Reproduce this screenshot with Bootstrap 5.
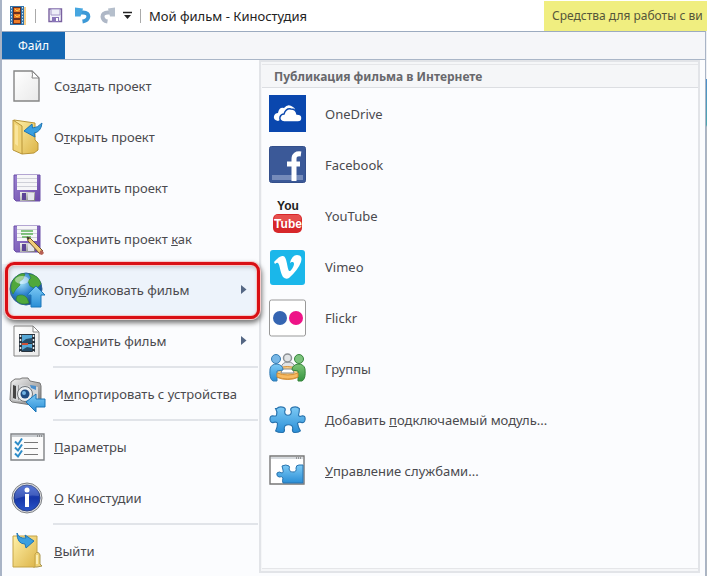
<!DOCTYPE html>
<html lang="ru">
<head>
<meta charset="utf-8">
<meta name="viewport" content="width=device-width, initial-scale=1">
<title>Мой фильм - Киностудия</title>
<link href="https://cdn.jsdelivr.net/npm/bootstrap@5.3.0/dist/css/bootstrap.min.css" rel="stylesheet">
<style>
body { font-family: "Noto Sans", "Open Sans", sans-serif; font-size: 13px; line-height: 18px; color: #4a4a4e; background: #fff; }
button { font: inherit; color: inherit; }
svg { display: block; flex: none; overflow: visible; }
.app-window { border-left: 2px solid #a9b4c6; }
.title-bar { height: 31px; padding-left: 6px; }
.quick-btn { border: 0; background: none; padding: 0; }
.v-line { width: 1px; height: 14px; background: #aaa; }
.app-title { font-size: 13px; color: #222; }
.context-tab { width: 163px; height: 30px; padding-left: 8px; background: #f0ee80; color: #55553a; font-size: 12px; white-space: nowrap; }
.frame-edge { padding-right: 1px; background: linear-gradient(#eef0f4 48px, #4c8fcb 48px, #4fa7b0 94px, #aeb6c0 96px); }
.file-frame { border-top: 1px solid #9cabc0; border-right: 1px solid #a9b4c6; background: #f5f6f9; }
.tab-strip { height: 28px; border-bottom: 1px solid #aab6c8; }
.file-tab { width: 63px; height: 27px; border: 0; background: #1467b3; color: #fff; font-size: 12px; }
.menu-body { background: #fbfcfe; min-height: calc(100vh - 60px); }
.menu-left { width: 256px; }
.menu-item { height: 51px; padding: 0 11px 0 6px; border: 0; background: none; text-align: left; gap: 8px; }
.menu-ico { width: 38px; display: flex; justify-content: center; }
.menu-sep { height: 2px; margin-left: 51px; background: #e1e4e9; }
.menu-item.chosen { position: relative; background: #edf3fb; }
.menu-item.chosen::after { content: ""; position: absolute; z-index: 2; inset: -2px -2px -4px 3px; border: 3px solid #d90f14; border-radius: 9px; box-shadow: 0 0 0 1px #f6c9c9, 1px 3px 5px 1px #777, inset 0 0 0 1px #f6c9c9, inset 1px 2px 4px #8888; }
.menu-right { border: 2px solid #e2e4e8; margin: 0 5px 3px 1px; padding: 2px 0 2px 1px; background: #f5f6f8; }
.pane { background: #fbfcfe; border: 1px solid #e5e6e9; border-width: 1px 0; }
.pane-title { font-size: 12px; line-height: 20px; font-weight: 700; color: #68686c; background: #f5f6f8; border-bottom: 1px solid #dcdee2; padding: 2px 0 0 12px; margin: 0; }
.service { height: 51px; padding: 0 7px; border: 0; background: none; text-align: left; gap: 18px; }
.svc-ico { width: 38px; }
.tube-text { font-family: "Liberation Sans Narrow", "Liberation Sans", sans-serif; font-weight: 700; font-size: 12px; }
</style>
<script src="https://cdn.jsdelivr.net/npm/bootstrap@5.3.0/dist/js/bootstrap.bundle.min.js"></script>
</head>
<body>
<svg width="0" height="0" class="position-absolute" aria-hidden="true">
  <defs>
    <linearGradient id="gold" x1="0" y1="0" x2="1" y2="1"><stop offset="0" stop-color="#fff0a8"/><stop offset="1" stop-color="#dcb448"/></linearGradient>
    <linearGradient id="paper" x1="0" y1="0" x2="1" y2="1"><stop offset="0" stop-color="#fff"/><stop offset="1" stop-color="#e9e9e9"/></linearGradient>
    <linearGradient id="sky" x1="0" y1="0" x2="0" y2="1"><stop offset="0" stop-color="#7dcaf5"/><stop offset="1" stop-color="#2a8ed6"/></linearGradient>
    <linearGradient id="violet" x1="0" y1="0" x2="1" y2="1"><stop offset="0" stop-color="#9a82d0"/><stop offset="1" stop-color="#6a45a8"/></linearGradient>
    <linearGradient id="metal" x1="0" y1="0" x2="1" y2="1"><stop offset="0" stop-color="#f5f5f5"/><stop offset="1" stop-color="#777"/></linearGradient>
    <radialGradient id="ocean" cx=".35" cy=".3" r=".75"><stop offset="0" stop-color="#a6e4fa"/><stop offset=".5" stop-color="#2f84ce"/><stop offset="1" stop-color="#164684"/></radialGradient>
    <linearGradient id="navy" x1="0" y1="0" x2="0" y2="1"><stop offset="0" stop-color="#3a5fd0"/><stop offset=".5" stop-color="#1636a8"/><stop offset="1" stop-color="#2a55c8"/></linearGradient>
    <linearGradient id="leaf" x1="0" y1="0" x2="0" y2="1"><stop offset="0" stop-color="#7cc576"/><stop offset="1" stop-color="#359440"/></linearGradient>
    <g id="floppy">
      <path d="M1 1h26v26H3l-2-2z" fill="url(#violet)" stroke="#6b4fa6"/>
      <path d="M4 1h20v15H4z" fill="#f6f6f8"/><path d="M4 4.500h20M4 8.500h20M4 12.500h20" stroke="#cfd0d8"/>
      <path d="M7 18h15v9H7z" fill="url(#metal)"/><path d="M9 19h4v7H9z" fill="#5c4496"/><path d="M15 19h6v7h-6z" fill="#e4e4ec"/>
    </g>
    <path id="jigsaw" d="M8 4q3-3 8-1q2 1 .5 4q0 4 3.500 4t3.500-4q-1.500-3 .5-4q5-2 8 1q0 4-1 7q1 2 4 .5q3.500 0 3 4q-.5 4-4 3q-3-1-4 1q1 5 3 8q-2 2-7 1.500q-2-1-1-4q0-4-4.500-4t-4.500 4q1 3-1 4q-5 .5-8-1.500q2-4 2-8q-1-2-4-1q-3.500 1-4-3q0-4 3-4q4 1 4-1q1-3-1-6.500z" fill="url(#sky)" stroke="#2873ae" stroke-width="1.200"/>
  </defs>
</svg>

<div class="app-window">
  <header class="title-bar d-flex align-items-center">
    <svg width="19" height="20" viewBox="0 0 19 20"><path d="M14 1h4v18h-4z" fill="#f6cf8a"/><path d="M2 0h14v19H2z" fill="#3173ac"/><path d="M5 1h8v17H5z" fill="#6b3020"/><path d="M6 2h6v4H6zM6 8h6v4H6zM6 14h6v3H6z" fill="#ee7c28"/><path d="M7 3l2 2 3-2M7 9l2 2 3-2" stroke="#ffd34d" fill="none"/><path d="M3.500 1v18M14.500 1v18" stroke="#d3e8f8" stroke-dasharray="1.500 1.500"/></svg>
    <div class="v-line ms-2 me-2"></div>
    <button class="quick-btn ms-1" type="button" aria-label="Сохранить"><svg width="15" height="15" viewBox="0 0 15 15"><path d="M1 1h12.500v12.500H1z" fill="#f2f2fa" stroke="#79619f" stroke-width="1.400"/><path d="M3 1h9v6H3z" fill="#eeeef8" stroke="#a497c8"/><path d="M4 9h7v5H4z" fill="#8975b8"/><path d="M8 10h2v3H8z" fill="#fff"/></svg></button>
    <button class="quick-btn ms-2" type="button" aria-label="Отменить"><svg class="ms-1" width="16" height="17" viewBox="0 0 16 17"><path d="M3 5.500h5c8 0 6.500 8-.5 9" fill="none" stroke="#3c99d7" stroke-width="4"/><path d="M0 .5l8 1-2.500 8H0z" fill="#46a6e0"/></svg></button>
    <button class="quick-btn ms-2" type="button" aria-label="Вернуть"><svg width="16" height="17" viewBox="0 0 16 17"><path d="M13 5.500H9c-8 0-6.500 8-.5 9" fill="none" stroke="#aeb7c6" stroke-width="4"/><path d="M16 .5l-7 1 2 8h5z" fill="#b5bfcc"/></svg></button>
    <button class="quick-btn ms-2 me-2" type="button" aria-label="Настройка панели"><svg width="9" height="9" viewBox="0 0 9 9"><path d="M0 1.500h9" stroke="#222" stroke-width="1.500"/><path d="M1 4h7L4.500 8z" fill="#222"/></svg></button>
    <div class="v-line me-2"></div>
    <span class="app-title">Мой фильм - Киностудия</span>
    <div class="context-tab ms-auto align-self-end d-flex align-items-center">Средства для работы с ви</div>
  </header>

  <div class="frame-edge">
  <div class="file-frame">
    <div class="tab-strip"><button class="file-tab p-0 d-block" type="button">Файл</button></div>
    <div class="menu-body d-flex">
      <nav class="menu-left flex-shrink-0" aria-label="Файл">
        <button type="button" class="menu-item w-100 d-flex align-items-center"><span class="menu-ico"><svg width="28" height="32" viewBox="0 0 28 32"><path d="M1 1h18l7 7v23H1z" fill="url(#paper)" stroke="#858585" stroke-width="1.400"/><path d="M19 1q1 4 0 7h7z" fill="#fff" stroke="#858585"/></svg></span><span>Со<u>з</u>дать проект</span></button>
        <button type="button" class="menu-item w-100 d-flex align-items-center"><span class="menu-ico"><svg width="32" height="36" viewBox="0 0 32 36"><path d="M3 1l21 3v17l3 3v7l-4 3-12 1z" fill="url(#gold)" stroke="#b99538"/><path d="M2 1l9 6v28l-9-4z" fill="#f0d376" stroke="#b99538"/><path d="M4 5l3 2v20l-3-2z" fill="#fff0b4" opacity=".6"/><path d="M31 4q-1 9-8 10l1 4-11-6 8-7 .5 4q5 0 9.500-5z" fill="#3a9fe0" stroke="#1f76b4"/></svg></span><span>О<u>т</u>крыть проект</span></button>
        <button type="button" class="menu-item w-100 d-flex align-items-center"><span class="menu-ico"><svg width="28" height="28" viewBox="0 0 28 28"><use href="#floppy"/></svg></span><span><u>С</u>охранить проект</span></button>
        <button type="button" class="menu-item w-100 d-flex align-items-center"><span class="menu-ico"><svg width="28" height="28" viewBox="0 0 28 28"><use href="#floppy"/><path d="M8 6h12M8 9h12M9 12h9" stroke="#5fb45b" stroke-width="1.500"/><path d="M14 12l3 1 13 13-3 3-12-13z" fill="#f1cc78" stroke="#6d5030"/><path d="M27 26l2-1 2 3-2 2-3-1z" fill="#b76054"/><path d="M14 12l3 1-2 2z" fill="#333"/></svg></span><span>Сохранить проект <u>к</u>ак</span></button>
        <button type="button" class="menu-item chosen w-100 d-flex align-items-center" aria-current="true"><span class="menu-ico"><svg width="36" height="36" viewBox="0 0 36 36"><circle cx="17" cy="17" r="16" fill="url(#ocean)" stroke="#31649a"/><path d="M4 8q7-8 12-6l-2 5-4 3 1 3-4 4-3 5q-4-6 0-14zM20 2q10 1 12 10l-5 5-6-3-2-5 3-3zM8 24q6-3 10 2l2 5q-8 3-13-3z" fill="#50a83c" stroke="#2f8130" stroke-width=".6"/><ellipse cx="13" cy="8" rx="7" ry="4" fill="#fff" opacity=".45"/><path d="M27 14l9 9h-4v12h-10V23h-4z" fill="url(#sky)" stroke="#1a77ba"/></svg></span><span>Опу<u>б</u>ликовать фильм</span><svg class="ms-auto" width="6" height="9" viewBox="0 0 6 9"><path d="M0 0l5.500 4.500L0 9z" fill="#556784"/></svg></button>
        <button type="button" class="menu-item w-100 d-flex align-items-center"><span class="menu-ico"><svg width="28" height="32" viewBox="0 0 28 32"><path d="M1 1h19l6 6v24H1z" fill="url(#paper)" stroke="#858585"/><path d="M20 1v6h6z" fill="#fff" stroke="#858585"/><path d="M6 9h16v18H6z" fill="#29333d"/><path d="M9 10h10v8H9zM9 19h10v7H9z" fill="#56a7d5"/><path d="M9 17l4-3 6-1v5H9zM9 25l5-3 5 1v3H9z" fill="#254c68"/><path d="M9 18h6v2H9z" fill="#ce5035"/><path d="M7.500 10v17M20.500 10v17" stroke="#e5e9ed" stroke-width="1.500" stroke-dasharray="2 2"/></svg></span><span>Сохр<u>а</u>нить фильм</span><svg class="ms-auto" width="6" height="9" viewBox="0 0 6 9"><path d="M0 0l5.500 4.500L0 9z" fill="#556784"/></svg></button>
        <div class="menu-sep"></div>
        <button type="button" class="menu-item w-100 d-flex align-items-center"><span class="menu-ico"><svg width="36" height="34" viewBox="0 0 36 34"><path d="M2 5l4-3h5l2-1h6l2 3 10 2 1 3v18l-3 2L3 25 1 23z" fill="url(#metal)" stroke="#777"/><path d="M4 7l25 3v17L4 23z" fill="#d5d7d9"/><path d="M4 8l3 1v13l-3-1z" fill="#444"/><path d="M9 8l1 .2v15l-1-.2z" fill="#999"/><circle cx="16" cy="17" r="7.500" fill="#edf0f2" stroke="#6e7377"/><circle cx="16" cy="17" r="4.500" fill="#204c82"/><circle cx="15" cy="16" r="2" fill="#72b5e5"/><path d="M21 8l6 1v4l-5-2z" fill="#4a8ecc"/><path d="M17 25l10-8v5h9v8h-9v5z" fill="url(#sky)" stroke="#1974b7"/></svg></span><span>И<u>м</u>портировать с устройства</span></button>
        <div class="menu-sep"></div>
        <button type="button" class="menu-item w-100 d-flex align-items-center"><span class="menu-ico"><svg width="35" height="28" viewBox="0 0 35 28"><path d="M1 1h33v26H1z" fill="#fbfbfb" stroke="#808386" stroke-width="1.400"/><path d="M2 2h31v2H2z" fill="#c8ccd0"/><path d="M27 3h5" stroke="#555" stroke-dasharray="1 1"/><path d="M14 9.500h14M14 15.500h14M14 21.500h14" stroke="#777"/><path d="M5 8.500l3 3 4-6M5 14.500l3 3 4-6M5 20.500l3 3 4-6" fill="none" stroke="#2d8cc8" stroke-width="2"/></svg></span><span><u>П</u>араметры</span></button>
        <button type="button" class="menu-item w-100 d-flex align-items-center"><span class="menu-ico"><svg width="32" height="32" viewBox="0 0 32 32"><circle cx="16" cy="16" r="15" fill="#ddd" stroke="#7e8186"/><circle cx="16" cy="16" r="13" fill="url(#navy)" stroke="#273f86"/><path d="M4 14a12 12 0 0 1 24 0q-12-2-24 3z" fill="#fff" opacity=".16"/><circle cx="16" cy="8" r="2.500" fill="#fff"/><path d="M14 12h4v13h-4z" fill="#fff"/></svg></span><span><u>О</u> Киностудии</span></button>
        <div class="menu-sep"></div>
        <button type="button" class="menu-item w-100 d-flex align-items-center"><span class="menu-ico"><svg width="30" height="35" viewBox="0 0 30 35"><path d="M22 20q5-2 6 2v9l2 2-5 1h-4z" fill="#f0d376" stroke="#aa9551"/><path d="M1 3h24v16l-2 2v13H1z" fill="url(#gold)" stroke="#c4a347"/><path d="M25 22v9" stroke="#fff7c8" stroke-width="1.500"/><path d="M5 0q2 6 9 5l-1-3 9 6-8 7-1-4q-8 0-8-11z" fill="#3a9fe0" stroke="#1f76b4"/></svg></span><span><u>В</u>ыйти</span></button>
      </nav>

      <section class="menu-right flex-grow-1 d-flex flex-column">
        <div class="pane flex-grow-1">
          <h2 class="pane-title">Публикация фильма в Интернете</h2>
          <button type="button" class="service w-100 d-flex align-items-center"><svg class="svc-ico" height="38" viewBox="0 0 38 38"><path d="M0 0h37v37H0z" fill="#0a47ae"/><path d="M9 26q-5-1-4-5 1-3 4-3 1-6 6-5 4-5 9-1 3 2 2 5" fill="#fff"/><path d="M15 27q-5-1-4-5 1-3 4-3 2-6 7-5 5 0 6 5 5 0 5 4 0 4-4 4z" fill="#fff" stroke="#0a47ae" stroke-width="1.500"/></svg><span>OneDrive</span></button>
          <button type="button" class="service w-100 d-flex align-items-center"><svg class="svc-ico" height="38" viewBox="0 0 38 38"><rect x=".5" y=".5" width="36" height="36" rx="2" fill="#3b5998" stroke="#334f8b"/><path d="M3 29h31v5H3z" fill="#758bba"/><path d="M25 35V13q0-6 7-5M18 18h13" fill="none" stroke="#fff" stroke-width="5"/></svg><span>Facebook</span></button>
          <button type="button" class="service w-100 d-flex align-items-center"><svg class="svc-ico" height="38" viewBox="0 0 38 38"><rect x="4" y="17" width="29" height="19" rx="5" fill="#d7272a"/><path d="M7 18h23q2 1 2 5-13 4-27 1 0-5 2-6" fill="#f06d67" opacity=".6"/><text class="tube-text" x="19" y="13" text-anchor="middle" fill="#222">You</text><text class="tube-text" x="19" y="31" text-anchor="middle" fill="#fff">Tube</text></svg><span>YouTube</span></button>
          <button type="button" class="service w-100 d-flex align-items-center"><svg class="svc-ico" height="38" viewBox="0 0 38 38"><rect x="1" y="2" width="35" height="35" rx="3" fill="#1ab7ea"/><path d="M5 14q6-7 9-6c4 0 4 12 6 15 2 1 5-5 5-7 0-3-3-2-4-1q2-8 7-8 6 0 4 7-3 8-12 16-3 2-6-1c-3-5-3-12-5-14q-1-1-3 1z" fill="#fff"/></svg><span>Vimeo</span></button>
          <button type="button" class="service w-100 d-flex align-items-center"><svg class="svc-ico" height="38" viewBox="0 0 38 38"><rect x=".5" y="1" width="36" height="36" rx="2" fill="#fff" stroke="#999"/><circle cx="11" cy="19" r="7" fill="#3565b2"/><circle cx="27" cy="19" r="7" fill="#ee1387"/></svg><span>Flickr</span></button>
          <button type="button" class="service w-100 d-flex align-items-center"><svg class="svc-ico" height="38" viewBox="0 0 38 38"><path d="M12 18q1-6 7-6t7 6z" fill="#e1e4e6" stroke="#8c9094"/><circle cx="18.500" cy="8" r="4" fill="#e1e4e6" stroke="#8c9094" stroke-width="1.500"/><path d="M7 19q11-5 23 0v8q-11 5-23 0z" fill="#f8ce87" stroke="#d5913a"/><path d="M13 19h11l1 4H12z" fill="#fff" stroke="#888"/><path d="M1 19q1-5 7-5 6 1 6 6l-6 1v10H4q-4-2-3-12z" fill="url(#sky)" stroke="#367cb2"/><circle cx="7" cy="9" r="4.500" fill="#77b7e6" stroke="#367cb2"/><path d="M36 19q-1-5-7-5-6 1-6 6l6 1v10h4q4-2 3-12z" fill="url(#leaf)" stroke="#37853d"/><circle cx="30" cy="9" r="4.500" fill="#7bc37c" stroke="#37853d"/><path d="M8 23q11 4 21 0v4q-10 4-21 0z" fill="#f7ba62" stroke="#d5913a"/></svg><span>Группы</span></button>
          <button type="button" class="service w-100 d-flex align-items-center"><svg class="svc-ico" height="38" viewBox="0 0 40 38"><use href="#jigsaw" y="3"/></svg><span>Добавить <u>п</u>одключаемый модуль...</span></button>
          <button type="button" class="service w-100 d-flex align-items-center"><svg class="svc-ico" height="38" viewBox="0 0 38 38"><path d="M1 4h34v28H1z" fill="#fff" stroke="#777" stroke-width="1.400"/><path d="M2 5h32v2H2z" fill="#d5d9dd"/><path d="M27 6h6" stroke="#555" stroke-dasharray="1 1"/><path d="M13 14q4-2 7 0 1 1 0 3 1 4 4 3 4 0 3-4 0-3 3-3h4v18H14q-1-2 0-5-1-2-4-1-3-1-2-4 2-2 5 0 2 0 1-3z" fill="url(#sky)" stroke="#2873ae"/></svg><span><u>У</u>правление службами...</span></button>
        </div>
      </section>
    </div>
  </div>
  </div>
</div>
</body>
</html>
